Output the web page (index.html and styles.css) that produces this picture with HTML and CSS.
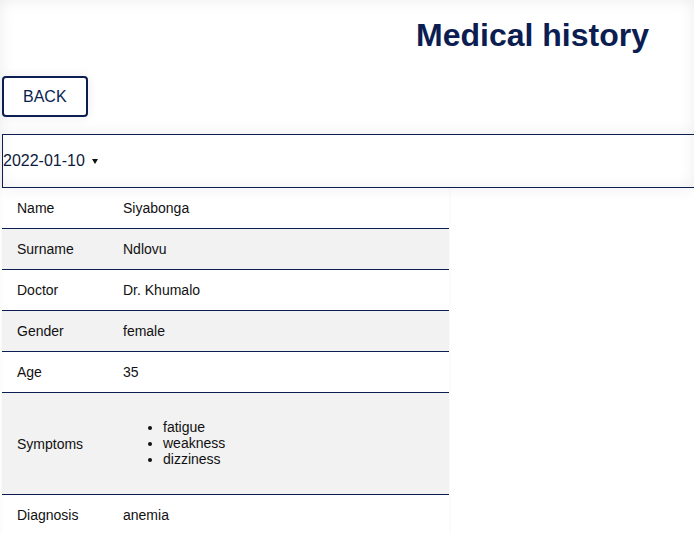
FILE: index.html
```html
<!DOCTYPE html>
<html lang="en">
<head>
<meta charset="utf-8">
<title>Medical history</title>
<link rel="stylesheet" href="styles.css">
</head>
<body>
<div class="page">
  <header class="top">
    <h1 class="title">Medical history</h1>
    <div class="actions">
      <button class="back" type="button">BACK</button>
    </div>
    <div class="date-select">
      <span class="date-value">2022-01-10</span>
      <span class="caret"></span>
    </div>
  </header>
  <table class="record">
    <tbody>
      <tr><td class="label">Name</td><td>Siyabonga</td></tr>
      <tr class="alt"><td class="label">Surname</td><td>Ndlovu</td></tr>
      <tr><td class="label">Doctor</td><td>Dr. Khumalo</td></tr>
      <tr class="alt"><td class="label">Gender</td><td>female</td></tr>
      <tr><td class="label">Age</td><td>35</td></tr>
      <tr class="alt"><td class="label">Symptoms</td><td>
        <ul class="symptoms">
          <li>fatigue</li>
          <li>weakness</li>
          <li>dizziness</li>
        </ul>
      </td></tr>
      <tr><td class="label">Diagnosis</td><td>anemia</td></tr>
    </tbody>
  </table>
</div>
</body>
</html>
```

FILE: styles.css
```css
html, body {
  margin: 0;
  padding: 0;
  background: #ffffff;
  overflow: hidden;
}

body {
  font-family: "Liberation Sans", Arial, sans-serif;
  color: #111111;
}

.page {
  width: 100%;
}

.top {
  padding: 0 0 0 2px;
  box-shadow: inset 0 0 16px rgba(0, 0, 0, 0.08);
  display: flex;
  flex-direction: column;
  align-items: stretch;
}

.title {
  margin: 17px 0 0 0;
  padding-right: 45px;
  font-size: 32px;
  font-weight: bold;
  line-height: 37px;
  color: #0b1d51;
  text-align: right;
}

.actions {
  margin-top: 22px;
  display: flex;
}

.back {
  font-family: "Liberation Sans", Arial, sans-serif;
  font-size: 16px;
  line-height: 19px;
  padding: 9px 19px;
  color: #0b1d51;
  background: #ffffff;
  border: 2px solid #0b1d51;
  border-radius: 4px;
  box-shadow: 0 0 12px rgba(0, 0, 0, 0.08);
  cursor: pointer;
}

.date-select {
  margin-top: 17px;
  height: 52px;
  border: 1px solid #0b1d51;
  border-right: none;
  display: flex;
  align-items: center;
  gap: 7px;
  padding-left: 0;
  font-size: 16px;
  color: #0b1d51;
  box-shadow: 0 0 16px rgba(0, 0, 0, 0.07);
}

.date-value {
  color: #0d1a3c;
}

.caret {
  width: 0;
  height: 0;
  border-left: 3px solid transparent;
  border-right: 3px solid transparent;
  border-top: 5px solid #111111;
  margin-top: 1px;
}

.record {
  margin-left: 2px;
  width: 447px;
  border-collapse: collapse;
  font-size: 14px;
  color: #111111;
  box-shadow: 0 0 3px rgba(0, 0, 0, 0.06);
}

.record td {
  padding: 12px 15px;
  border-bottom: 1px solid #0b1d51;
  vertical-align: middle;
  line-height: 16px;
  text-align: left;
}

.record tr:last-child td {
  border-bottom: none;
}

.record td.label {
  width: 76px;
}

.record tr.alt td {
  background: #f2f2f2;
}

.symptoms {
  margin: 14px 0 15px 0;
  padding-left: 40px;
  line-height: 16px;
}
```
